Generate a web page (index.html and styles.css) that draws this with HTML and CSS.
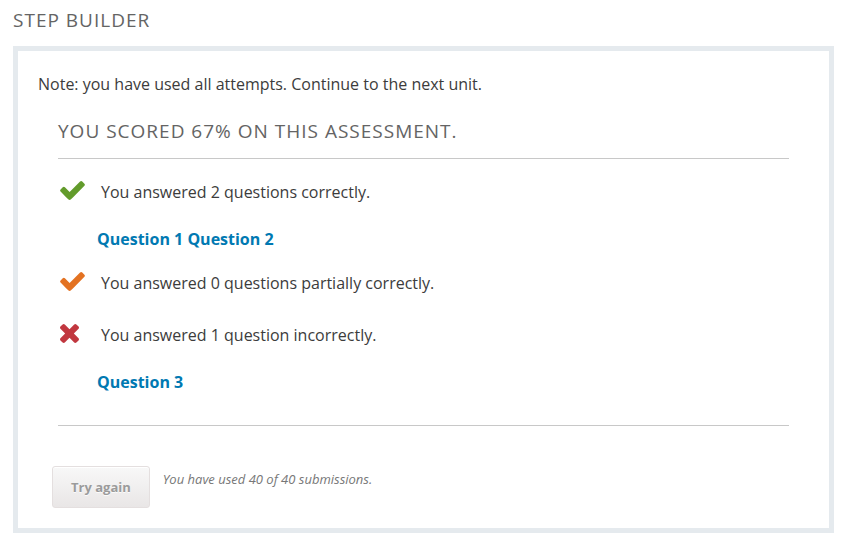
FILE: index.html
```html
<!DOCTYPE html>
<html lang="en">
<head>
<meta charset="utf-8">
<title>Step Builder</title>
<link rel="stylesheet" href="styles.css">
</head>
<body>
<main class="step-builder">
  <h1 class="heading">Step Builder</h1>
  <section class="panel">
    <p class="note">Note: you have used all attempts. Continue to the next unit.</p>
    <div class="review">
      <h2 class="heading">You scored 67% on this assessment.</h2>
      <hr class="rule">
      <div class="result">
        <span class="mark correct"><svg class="check" viewBox="121 270 1550 1252" aria-hidden="true"><path d="M1671 566q0 40-28 68l-724 724-136 136q-28 28-68 28t-68-28l-136-136-362-362q-28-28-28-68t28-68l136-136q28-28 68-28t68 28l294 295 656-657q28-28 68-28t68 28l136 136q28 28 28 68z"/></svg></span>
        <p>You answered 2 questions correctly.</p>
      </div>
      <div class="questions"><a href="#q1">Question 1</a> <a href="#q2">Question 2</a></div>
      <div class="result">
        <span class="mark partial"><svg class="check" viewBox="121 270 1550 1252" aria-hidden="true"><path d="M1671 566q0 40-28 68l-724 724-136 136q-28 28-68 28t-68-28l-136-136-362-362q-28-28-28-68t28-68l136-136q28-28 68-28t68 28l294 295 656-657q28-28 68-28t68 28l136 136q28 28 28 68z"/></svg></span>
        <p>You answered 0 questions partially correctly.</p>
      </div>
      <div class="result">
        <span class="mark incorrect"><svg class="cross" viewBox="302 366 1188 1188" aria-hidden="true"><path d="M1490 1322q0 40-28 68l-136 136q-28 28-68 28t-68-28l-294-294-294 294q-28 28-68 28t-68-28l-136-136q-28-28-28-68t28-68l294-294-294-294q-28-28-28-68t28-68l136-136q28-28 68-28t68 28l294 294 294-294q28-28 68-28t68 28l136 136q28 28 28 68t-28 68l-294 294 294 294q28 28 28 68z"/></svg></span>
        <p>You answered 1 question incorrectly.</p>
      </div>
      <div class="questions"><a href="#q3">Question 3</a></div>
      <hr class="rule">
    </div>
    <div class="actions">
      <button class="try-again" type="button" disabled>Try again</button>
      <p class="attempts">You have used 40 of 40 submissions.</p>
    </div>
  </section>
</main>
</body>
</html>
```
FILE: styles.css
```css
* {
  box-sizing: border-box;
}

body {
  margin: 0;
  background: #fff;
  color: #3c3c3c;
  font-family: "Open Sans", "Noto Sans", sans-serif;
  font-size: 16px;
  line-height: 24px;
}

h1, h2, p {
  margin: 0;
}

.step-builder {
  padding: 8px 14px 8px 13px;
}

.heading {
  color: #646464;
  font-size: 19px;
  font-weight: 400;
  line-height: 24px;
  letter-spacing: 1px;
  text-transform: uppercase;
}

.panel {
  margin-top: 14px;
  padding: 21px 20px 20px;
  border: 5px solid #e5eaee;
}

.review {
  padding: 23px 20px 0;
}

.rule {
  height: 1px;
  margin: 15px 0 0;
  border: 0;
  background: #c8c8c8;
}

.result {
  display: flex;
  align-items: center;
  height: 52px;
  margin-top: -2px;
}

.rule + .result {
  margin-top: 7px;
}

.result + .result {
  margin-top: 0;
}

.mark {
  display: flex;
  width: 43px;
  padding: 0 0 4px 2px;
}

.mark svg {
  display: block;
  fill: currentColor;
}

.check {
  width: 25px;
  height: 20px;
}

.cross {
  width: 19px;
  height: 19px;
}

.correct {
  color: #629b2b;
}

.partial {
  color: #e37222;
}

.incorrect {
  color: #c1373f;
}

.questions {
  padding: 9px 0 8px 39px;
}

.questions a {
  color: #0079b2;
  font-weight: 700;
  text-decoration: none;
}

.questions + .rule {
  margin-top: 23px;
}

.actions {
  display: flex;
  gap: 13px;
  padding: 40px 14px 0;
}

.try-again {
  height: 42px;
  padding: 0 18px;
  border: 1px solid #e4dfdf;
  border-radius: 3px;
  background: linear-gradient(#f8f8f8, #e9e6e6);
  box-shadow: inset 0 1px 0 #fff;
  color: #9b9b9b;
  font: 700 13px/20px "Open Sans", "Noto Sans", sans-serif;
  text-shadow: 0 1px 0 #fcfbfb;
}

.attempts {
  padding-top: 3px;
  color: #777;
  font-size: 13px;
  font-style: italic;
  line-height: 20px;
}
```
